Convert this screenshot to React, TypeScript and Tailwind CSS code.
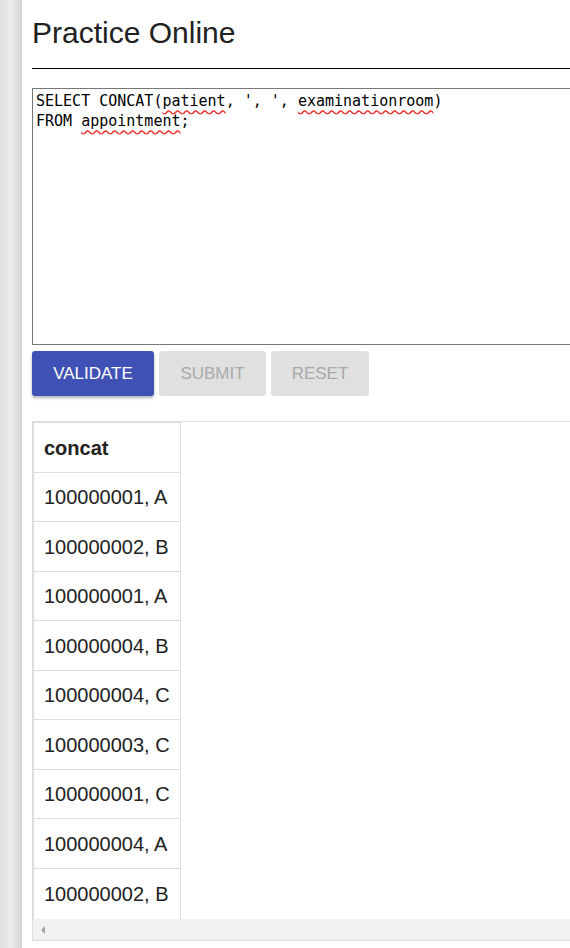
import React from "react";

const rows = [
  "100000001, A",
  "100000002, B",
  "100000001, A",
  "100000004, B",
  "100000004, C",
  "100000003, C",
  "100000001, C",
  "100000004, A",
  "100000002, B",
];

const sans = { fontFamily: '"Liberation Sans", Arial, sans-serif' };

export default function App() {
  return (
    <div className="flex h-[948px] w-[570px] overflow-hidden bg-white text-[#222]" style={sans}>
      {/* left rail */}
      <div className="h-full w-[22px] shrink-0 bg-gradient-to-r from-[#e0e0e0] via-[#ededed] to-[#d2d2d2]" />

      <div className="w-[620px] shrink-0 pl-[10px]">
        <h1 className="mt-[16px] text-[30px] font-normal leading-[34px] text-[#212121]">Practice Online</h1>
        <div className="mt-[18px] h-px bg-black" />

        {/* editor */}
        <div
          className="mt-[19px] h-[257px] border border-[#777] px-[3px] pt-[2px] text-[15px] leading-[20px] text-black"
          style={{ fontFamily: '"DejaVu Sans Mono", Consolas, monospace' }}
        >
          <div className="whitespace-pre">
            SELECT CONCAT(<span className="underline decoration-wavy decoration-[#e33] underline-offset-[3px]">patient</span>, ', ',{" "}
            <span className="underline decoration-wavy decoration-[#e33] underline-offset-[3px]">examinationroom</span>)
          </div>
          <div className="whitespace-pre">
            FROM <span className="underline decoration-wavy decoration-[#e33] underline-offset-[3px]">appointment</span>;
          </div>
        </div>

        {/* actions */}
        <div className="mt-[6px] flex gap-[5px]">
          <button className="h-[45px] w-[122px] rounded-[3px] bg-[#3f51b5] text-[17px] text-white shadow-[0_2px_3px_rgba(0,0,0,0.3)]">
            VALIDATE
          </button>
          <button className="h-[45px] w-[107px] rounded-[3px] bg-[#e0e0e0] text-[17px] text-[#a9a9a9]">SUBMIT</button>
          <button className="h-[45px] w-[98px] rounded-[3px] bg-[#e0e0e0] text-[17px] text-[#a9a9a9]">RESET</button>
        </div>

        {/* result */}
        <div className="mt-[25px] border border-[#ddd]">
          <div className="w-[148px] border-x border-t border-[#ddd] text-[20px]">
            <div className="flex h-[50px] items-center border-b border-[#ddd] pl-[10px] font-bold">concat</div>
            {rows.map((r, i) => (
              <div
                key={i}
                className={`flex items-center pl-[10px] ${i === rows.length - 1 ? "h-[50px]" : i % 2 === 0 ? "h-[49px] border-b border-[#ddd]" : "h-[50px] border-b border-[#ddd]"}`}
              >
                {r}
              </div>
            ))}
          </div>
          <div className="flex h-[21px] items-center bg-[#f1f1f1] pl-[8px]">
            <div className="h-0 w-0 border-y-[4px] border-r-[4px] border-y-transparent border-r-[#a3a3a3]" />
          </div>
        </div>
      </div>
    </div>
  );
}
